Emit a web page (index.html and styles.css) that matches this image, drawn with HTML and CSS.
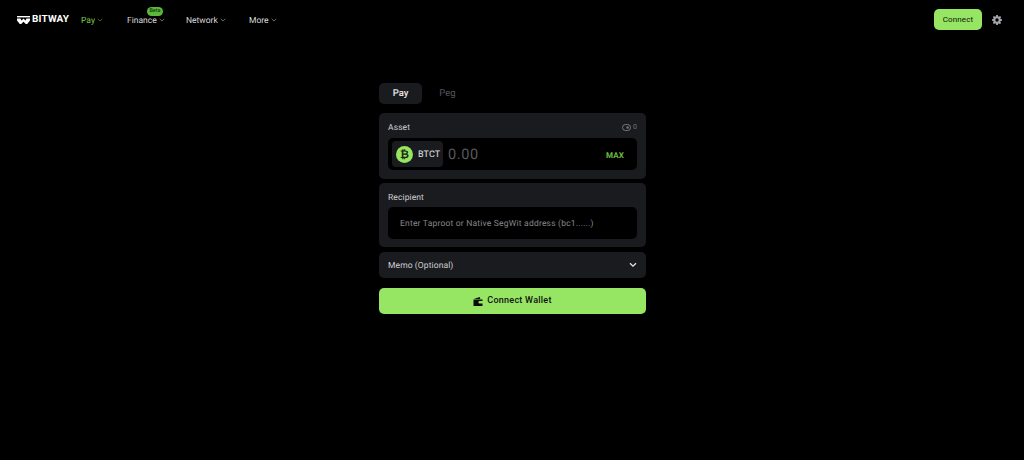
FILE: index.html
```html
<!DOCTYPE html>
<html lang="en">
<head>
  <meta charset="UTF-8">
  <title>Bitway - Pay</title>
  <link rel="stylesheet" href="styles.css">
</head>
<body>
  <header class="topbar">
    <a class="logo">
      <svg class="logo-mark" width="13" height="8" viewBox="0 0 13 8">
        <path d="M0 0H13V1.4H0Z" fill="#fff"/>
        <path d="M0 2.6H3.4L4.6 4.4 6.5 2.6 8.4 4.4 9.6 2.6H13V4.6L10.2 8H8.8L6.5 5.8 4.2 8H2.8L0 4.6Z" fill="#fff"/>
      </svg>
      <span class="logo-text">BITWAY</span>
    </a>
    <nav class="nav">
      <a class="nav-item nav-active">Pay <svg class="caret" width="6" height="4" viewBox="0 0 6 4"><path d="M.7.8 3 3.1 5.3.8" fill="none" stroke="currentColor" stroke-width=".9"/></svg></a>
      <a class="nav-item">Finance <svg class="caret" width="6" height="4" viewBox="0 0 6 4"><path d="M.7.8 3 3.1 5.3.8" fill="none" stroke="currentColor" stroke-width=".9"/></svg><span class="beta">Beta</span></a>
      <a class="nav-item">Network <svg class="caret" width="6" height="4" viewBox="0 0 6 4"><path d="M.7.8 3 3.1 5.3.8" fill="none" stroke="currentColor" stroke-width=".9"/></svg></a>
      <a class="nav-item">More <svg class="caret" width="6" height="4" viewBox="0 0 6 4"><path d="M.7.8 3 3.1 5.3.8" fill="none" stroke="currentColor" stroke-width=".9"/></svg></a>
    </nav>
    <div class="top-right">
      <button class="connect-btn">Connect</button>
      <svg class="gear" width="10" height="10" viewBox="0 0 24 24"><path fill="#a3a3a8" fill-rule="evenodd" d="M10 0h4l.6 3.2 1.9.8 2.7-1.8 2.8 2.8-1.8 2.7.8 1.9L24 10v4l-3.2.6-.8 1.9 1.8 2.7-2.8 2.8-2.7-1.8-1.9.8L14 24h-4l-.6-3.2-1.9-.8-2.7 1.8L2 19l1.8-2.7-.8-1.9L0 14v-4l3-.6.8-1.9L2 5l2.8-2.8 2.7 1.8 1.9-.8ZM12 8a4 4 0 1 0 0 8 4 4 0 0 0 0-8Z"/></svg>
    </div>
  </header>

  <main class="panel">
    <div class="tabs">
      <div class="tab tab-active">Pay</div>
      <div class="tab">Peg</div>
    </div>

    <section class="card card-asset">
      <div class="card-head">
        <span class="card-label">Asset</span>
        <span class="balance">
          <svg width="9" height="7" viewBox="0 0 9 7"><rect x=".5" y=".5" width="8" height="6" rx="3" fill="none" stroke="#77787d" stroke-width="1"/><circle cx="5.6" cy="3.5" r="1.2" fill="#77787d"/></svg>
          0
        </span>
      </div>
      <div class="field field-asset">
        <div class="token">
          <span class="token-icon">₿</span>
          <span class="token-name">BTCT</span>
        </div>
        <span class="amount">0.00</span>
        <span class="max">MAX</span>
      </div>
    </section>

    <section class="card card-recipient">
      <div class="card-head">
        <span class="card-label">Recipient</span>
      </div>
      <div class="field field-address">Enter Taproot or Native SegWit address (bc1......)</div>
    </section>

    <section class="card memo">
      <span class="card-label">Memo (Optional)</span>
      <svg width="8" height="6" viewBox="0 0 8 6"><path d="M1 1.2 4 4.2 7 1.2" fill="none" stroke="#e6e6e8" stroke-width="1.3"/></svg>
    </section>

    <button class="wallet-btn">
      <svg width="10" height="9" viewBox="0 0 10 9"><path d="M1 2 6.6 0 7.4 2Z" fill="#0a0a0a"/><path d="M.5 2.4H9.5V4H6.6A1.2 1.2 0 0 0 6.6 6.4H9.5V9H.5Z" fill="#0a0a0a"/></svg>
      <span class="wallet-label">Connect Wallet</span>
    </button>
  </main>
</body>
</html>
```

FILE: styles.css
```css
* {
  box-sizing: border-box;
}
body {
  margin: 0;
  background: #000;
  color: #e6e6e8;
  font-family: 'Roboto', 'Liberation Sans', sans-serif;
  font-size: 8px;
  text-rendering: geometricPrecision;
}
.topbar {
  display: flex;
  align-items: center;
  height: 39px;
  padding: 0 22px 0 17px;
}
.logo {
  display: flex;
  align-items: center;
  gap: 2px;
  width: 64px;
}
.logo-text {
  color: #fff;
  font-size: 10px;
  font-weight: 700;
  letter-spacing: 0.15px;
}
.nav {
  display: flex;
  padding-top: 2px;
}
.nav-item {
  position: relative;
  font-size: 8.5px;
  color: #d9d9dc;
}
.nav-item:nth-child(1) { width: 46px; }
.nav-item:nth-child(2) { width: 59px; }
.nav-item:nth-child(3) { width: 63px; }
.nav-active {
  color: #7fc94f;
}
.caret {
  vertical-align: 1px;
  opacity: 0.55;
}
.beta {
  position: absolute;
  left: 20px;
  top: -9px;
  width: 16px;
  height: 9px;
  line-height: 9px;
  text-align: center;
  border-radius: 5px;
  background: #5cb83a;
  color: #0b1a06;
  font-size: 5.5px;
}
.top-right {
  display: flex;
  align-items: center;
  gap: 10px;
  margin-left: auto;
}
.connect-btn {
  width: 48px;
  height: 21px;
  border: none;
  border-radius: 5px;
  background: #96e563;
  color: #111;
  font-family: inherit;
  font-size: 8px;
  letter-spacing: 0.1px;
}
.panel {
  width: 267px;
  margin: 44px auto 0 379px;
}
.tabs {
  display: flex;
  height: 21px;
  margin-bottom: 9px;
}
.tab {
  width: 43px;
  line-height: 21px;
  text-align: center;
  border-radius: 5px;
  color: #55565e;
  font-size: 9.5px;
  margin-right: 4px;
}
.tab-active {
  background: #1a1b1f;
  color: #e6e6e8;
  font-weight: 500;
}
.card {
  background: #1a1b1f;
  border-radius: 5px;
  padding: 8px 9px;
}
.card-asset {
  height: 66px;
  margin-bottom: 4px;
}
.card-recipient {
  height: 64px;
  margin-bottom: 5px;
}
.card-head {
  display: flex;
  justify-content: space-between;
  align-items: center;
  height: 12px;
  margin-bottom: 5px;
}
.card-recipient .card-head {
  margin-bottom: 4px;
}
.card-label {
  padding-top: 2px;
  color: #cfcfd3;
  font-size: 8.5px;
  letter-spacing: 0.1px;
}
.balance {
  display: flex;
  align-items: center;
  gap: 2px;
  color: #77787d;
  font-size: 7px;
}
.field {
  display: flex;
  align-items: center;
  background: #000;
  border-radius: 5px;
  height: 32px;
}
.field-asset {
  padding: 0 13px 0 4px;
}
.token {
  display: flex;
  align-items: center;
  gap: 5px;
  width: 51px;
  height: 26px;
  padding-left: 4px;
  background: #1a1b1f;
  border-radius: 4px;
}
.token-icon {
  width: 17px;
  height: 17px;
  border-radius: 50%;
  background: #96e563;
  color: #1a2a10;
  font-size: 11px;
  font-weight: 700;
  line-height: 17px;
  text-align: center;
  font-family: 'DejaVu Sans', sans-serif;
}
.token-name {
  padding-top: 2px;
  color: #e6e6e8;
  font-size: 9px;
  letter-spacing: 0.1px;
}
.amount {
  margin-left: 5px;
  color: #57585c;
  font-size: 14.5px;
  letter-spacing: 0.6px;
}
.max {
  margin-left: auto;
  padding-top: 2px;
  color: #6fbe3f;
  font-size: 8px;
  font-weight: 700;
  letter-spacing: 0.15px;
}
.field-address {
  padding-left: 12px;
  padding-top: 2px;
  color: #85868b;
  font-size: 8.5px;
  letter-spacing: 0.2px;
}
.memo {
  display: flex;
  justify-content: space-between;
  align-items: center;
  height: 26px;
  padding: 0 9px;
  margin-bottom: 10px;
}
.wallet-btn {
  display: flex;
  justify-content: center;
  align-items: center;
  gap: 4px;
  width: 100%;
  height: 26px;
  border: none;
  border-radius: 5px;
  background: #96e563;
  color: #111;
  font-family: inherit;
  font-size: 9px;
  font-weight: 500;
  letter-spacing: 0.25px;
}
.wallet-label {
  padding-bottom: 2px;
}
```
